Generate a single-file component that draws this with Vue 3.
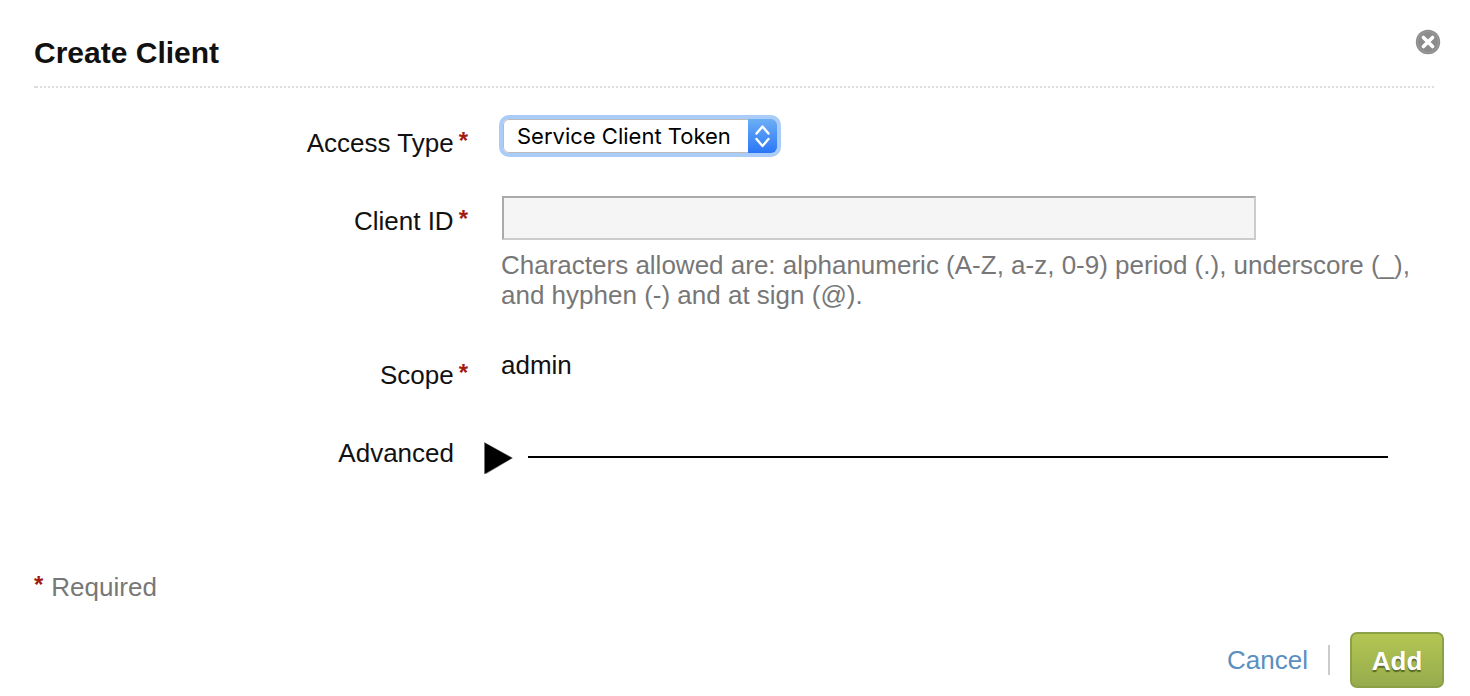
<script setup>
import { ref } from 'vue'

const accessType = ref('service')
const clientId = ref('')
const expanded = ref(false)
</script>

<template>
  <form class="dialog" @submit.prevent>
    <header class="header">
      <h1 class="title">Create Client</h1>
      <button class="close" type="button" aria-label="Close">
        <svg viewBox="0 0 26 26" width="26" height="26" aria-hidden="true">
          <circle cx="13" cy="13" r="12.2" fill="#8b8b8b" />
          <circle cx="13" cy="13" r="10.5" fill="none" stroke="#999" stroke-width="1.2" />
          <path d="M8.400 8.400l9.200 9.200M17.600 8.400l-9.200 9.200" stroke="#fff" stroke-width="3.6" stroke-linecap="round" />
        </svg>
      </button>
    </header>

    <div class="rows">
      <div class="row">
        <label class="label" for="access-type">Access Type<span class="star">*</span></label>
        <div class="field">
          <div class="picker">
            <select id="access-type" v-model="accessType" class="select">
              <option value="service">Service Client Token</option>
            </select>
            <span class="stepper">
              <svg viewBox="0 0 29 34" width="29" height="34" aria-hidden="true">
                <path d="M8.500 14.500l6-7 6 7M8.500 20l6 7 6-7" fill="none" stroke="#fff" stroke-width="2.4" stroke-linecap="round" stroke-linejoin="round" />
              </svg>
            </span>
          </div>
        </div>
      </div>

      <div class="row">
        <label class="label" for="client-id">Client ID<span class="star">*</span></label>
        <div class="field">
          <input id="client-id" v-model="clientId" class="input" type="text" aria-describedby="client-hint" />
          <p id="client-hint" class="hint">Characters allowed are: alphanumeric (A-Z, a-z, 0-9) period (.), underscore (_), and hyphen (-) and at sign (@).</p>
        </div>
      </div>

      <div class="row">
        <div class="label">Scope<span class="star">*</span></div>
        <div class="field">admin</div>
      </div>

      <div class="row">
        <label class="label plain" for="advanced">Advanced</label>
        <div class="advanced">
          <button id="advanced" class="toggle" type="button" :aria-expanded="expanded" @click="expanded = !expanded">
            <svg viewBox="0 0 30 34" width="30" height="34" aria-hidden="true">
              <path d="M1 1L30 17 3 33H1z" fill="#777" />
              <path d="M2 2L29 17 3 32H2z" fill="#000" />
            </svg>
          </button>
          <span class="rule"></span>
        </div>
      </div>
    </div>

    <p class="required"><span class="star">*</span>Required</p>

    <footer class="actions">
      <a class="cancel" href="#">Cancel</a>
      <span class="divider"></span>
      <button class="add" type="submit">Add</button>
    </footer>
  </form>
</template>

<style>
body {
  background: #fff;
}
</style>

<style scoped>
.dialog {
  padding: 28px 26px 8px 34px;
  color: #111;
  font-family: "Liberation Sans", Arial, sans-serif;
  font-size: 26px;
  line-height: 30px;
}

.header {
  display: flex;
  justify-content: space-between;
  align-items: flex-start;
  height: 60px;
  margin-right: 10px;
  background:
    linear-gradient(#ddd, #ddd) 0 100% / 2px 2px no-repeat,
    repeating-linear-gradient(90deg, #ddd 0 2px, transparent 2px 4px) 2px 100% / 100% 2px no-repeat;
}

.title {
  margin: 8px 0 0;
  font-size: 30px;
  line-height: 34px;
}

.close {
  width: 26px;
  height: 26px;
  margin: 1px -7px 0 0;
  padding: 0;
  border: 0;
  background: none;
}

.close svg,
.toggle svg,
.stepper svg {
  display: block;
}

.rows {
  display: flex;
  flex-direction: column;
  gap: 38px;
  padding-top: 30px;
}

.row {
  display: grid;
  grid-template-columns: 434px 1fr;
  column-gap: 33px;
}

.label {
  padding-top: 10px;
  text-align: right;
}

.plain {
  padding-right: 14px;
}

.star {
  margin-left: 5px;
  color: #a11b12;
  font-size: 24px;
  font-weight: bold;
  line-height: 0;
  vertical-align: 3px;
}

.field {
  min-width: 0;
}

.picker {
  display: grid;
  grid-template-columns: 1fr 29px;
  width: 274px;
  height: 34px;
  margin: 1px 2px;
  border-radius: 6px;
  box-shadow: 0 0 0 4px #a9cdf8;
}

.select {
  grid-area: 1 / 1 / 2 / 3;
  appearance: none;
  padding: 0 42px 0 13px;
  border: 1px solid #bbb;
  border-radius: 6px;
  outline: none;
  background: #fff;
  color: #000;
  font: 22px "Inter", sans-serif;
}

.stepper {
  grid-area: 1 / 2 / 2 / 3;
  z-index: 1;
  border-radius: 0 6px 6px 0;
  background: linear-gradient(#6caef5, #2a76f7);
  pointer-events: none;
}

.input {
  display: block;
  box-sizing: border-box;
  width: 80%;
  height: 44px;
  margin: 0 1px;
  padding: 0 8px;
  border: 2px solid #ccc;
  border-top-color: #aaa;
  border-left-color: #aaa;
  background: #f5f5f5;
  font: inherit;
}

.hint {
  margin: 10px 0 2px;
  color: #777;
}

.advanced {
  display: flex;
  align-items: flex-start;
  gap: 15px;
  margin: 13px 56px 0 -18px;
}

.toggle {
  width: 30px;
  height: 34px;
  padding: 0;
  border: 0;
  background: none;
}

.rule {
  flex: 1;
  height: 2px;
  margin-top: 15px;
  background: #000;
}

.required {
  margin: 97px 0 0;
  color: #777;
}

.required .star {
  margin: 0 8px 0 0;
}

.actions {
  display: flex;
  justify-content: flex-end;
  align-items: center;
  margin-top: 30px;
}

.cancel {
  color: #5a8fc0;
  text-decoration: none;
}

.divider {
  width: 2px;
  height: 30px;
  margin: 0 20px;
  background: #ccc;
}

.add {
  width: 94px;
  height: 56px;
  padding: 2px 0 0;
  border: 2px solid #8ca048;
  border-radius: 7px;
  background: linear-gradient(#b3c653, #97ab4d);
  color: #fff;
  font: bold 26px "Liberation Sans", Arial, sans-serif;
  text-shadow: 0 2px 1px rgba(50, 65, 10, 0.65);
}
</style>
